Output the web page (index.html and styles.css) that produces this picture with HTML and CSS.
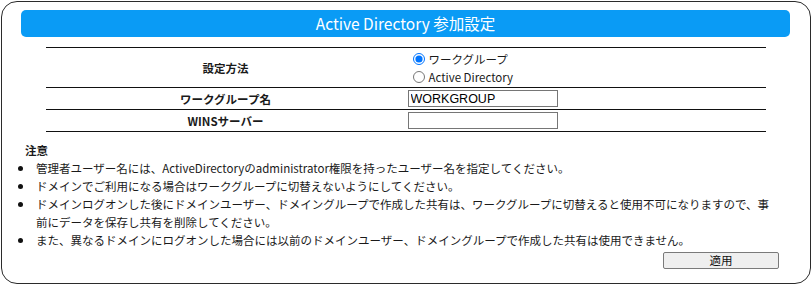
FILE: index.html
```
<!DOCTYPE html>
<html lang="ja">
<head>
<meta charset="UTF-8" />
<title>Active Directory 参加設定</title>
<link rel="stylesheet" href="styles.css">
</head>
<body>

<div class="panel">
  <h2 class="panel-title">Active Directory 参加設定</h2>

  <table class="form-table">
    <tr>
      <th>設定方法</th>
      <td>
        <label class="radio-line"><input type="radio" name="mode" checked> ワークグループ</label>
        <label class="radio-line"><input type="radio" name="mode"> Active Directory</label>
      </td>
    </tr>
    <tr>
      <th>ワークグループ名</th>
      <td><input type="text" class="text-box" value="WORKGROUP"></td>
    </tr>
    <tr>
      <th>WINSサーバー</th>
      <td><input type="text" class="text-box" value=""></td>
    </tr>
  </table>

  <div class="notes">
    <div class="notes-title">注意</div>
    <ul>
      <li><span>管理者ユーザー名には、ActiveDirectoryのadministrator権限を持ったユーザー名を指定してください。</span></li>
      <li><span>ドメインでご利用になる場合はワークグループに切替えないようにしてください。</span></li>
      <li><span>ドメインログオンした後にドメインユーザー、ドメイングループで作成した共有は、ワークグループに切替えると使用不可になりますので、事前にデータを保存し共有を削除してください。</span></li>
      <li><span>また、異なるドメインにログオンした場合には以前のドメインユーザー、ドメイングループで作成した共有は使用できません。</span></li>
    </ul>
  </div>

  <div class="actions">
    <button class="apply-btn">適用</button>
  </div>
</div>

</body>
</html>
```

FILE: styles.css
```
html, body {
  margin: 0;
  padding: 0;
  background: #ffffff;
}
body {
  font-family: "Noto Sans CJK JP", "Noto Sans", sans-serif;
  font-size: 11.5px;
  color: #1a1a1a;
}
.panel {
  box-sizing: border-box;
  width: 810px;
  height: 283px;
  margin: 1px 0 0 1px;
  padding: 8px 20px 0 19px;
  border: 1px solid #2b2b2b;
  border-radius: 16px;
}
.panel-title {
  margin: 0;
  height: 27px;
  line-height: 27px;
  background: #0a9bf5;
  color: #ffffff;
  border-radius: 5px;
  text-align: center;
  font-size: 15.5px;
  font-weight: normal;
}
.form-table {
  width: 720px;
  margin: 10px auto 0;
  border-collapse: collapse;
}
.form-table th,
.form-table td {
  width: 50%;
  padding: 0;
  border-top: 1px solid #111;
  border-bottom: 1px solid #111;
  vertical-align: middle;
}
.form-table th {
  font-weight: bold;
  text-align: center;
  height: 21px;
}
.form-table td {
  padding-left: 2px;
}
.radio-line {
  display: flex;
  align-items: center;
  height: 18px;
  line-height: 18px;
  font-family: "Noto Sans CJK JP", "Open Sans", sans-serif;
  font-size: 11.5px;
}
.form-table tr:first-child td {
  height: 39px;
}
.radio-line input {
  margin: 0 4px 0 5px;
  width: 12px;
  height: 12px;
}
.text-box {
  box-sizing: border-box;
  display: block;
  width: 150px;
  height: 17px;
  margin: 0;
  padding: 0 2px;
  border: 1px solid #767676;
  font-family: "Liberation Sans", Arial, sans-serif;
  font-size: 12.5px;
  color: #000;
}
.notes {
  margin-top: 9px;
}
.notes-title {
  font-weight: bold;
  line-height: 18px;
  padding-left: 4px;
}
.notes ul {
  list-style: none;
  margin: 0;
  padding: 0 14px 0 0;
}
.notes li {
  display: flex;
  align-items: flex-start;
  line-height: 18px;
}
.notes li::before {
  content: '';
  flex: 0 0 5px;
  height: 5px;
  margin: 7px 13px 0 -3px;
  border-radius: 50%;
  background: #111;
}
.actions {
  display: flex;
  justify-content: flex-end;
  margin-top: 3px;
  padding-right: 11px;
}
.apply-btn {
  width: 116px;
  height: 17px;
  padding: 0;
  border: 1px solid #7a7a7a;
  border-radius: 2px;
  background: #efefef;
  font-family: "Noto Sans CJK JP", sans-serif;
  font-size: 11.5px;
  line-height: 15px;
  color: #111;
}
```
